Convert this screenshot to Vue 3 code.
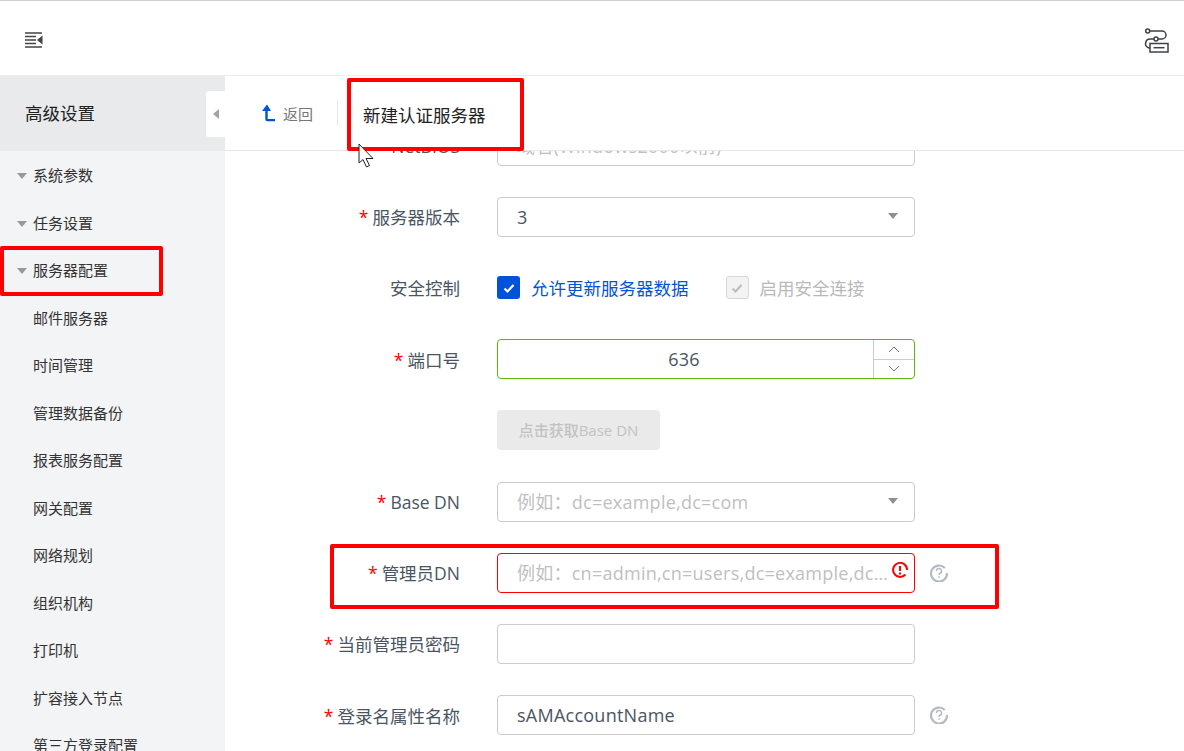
<template>
  <div class="page">
    <header class="topbar">
      <svg class="menu-icon" width="18" height="16" viewBox="0 0 18 16">
        <path d="M0 1h17M0 4.500h11M0 8h11M0 11.500h11M0 15h17" stroke="#444" stroke-width="1.300" fill="none" />
        <path d="M17.500 3.500v9l-5.500-4.500z" fill="#444" />
      </svg>
      <svg class="flow-icon" width="26" height="26" viewBox="0 0 26 26">
        <g fill="none" stroke="#3d4248" stroke-width="1.500">
          <circle cx="4.700" cy="4" r="2" />
          <path d="M6.700 4h12.300a4 4 0 0 1 4 4a4 4 0 0 1-4 4H7a4.500 4.500 0 0 0-2 8.500 5 5 0 0 0 2 .5" />
          <circle cx="13" cy="12" r="2" fill="#fff" />
          <rect x="7" y="16.500" width="18" height="8.500" fill="#fff" />
          <path d="M10.500 20.700h11" />
        </g>
      </svg>
    </header>
    <div class="body">
      <aside class="sidebar">
        <div class="side-title">高级设置</div>
        <button class="collapse"><i class="tri-left"></i></button>
        <ul class="menu">
          <li v-for="item in groups" :key="item" class="group"><i class="tri-down"></i>{{ item }}</li>
          <li v-for="item in children" :key="item" class="child">{{ item }}</li>
        </ul>
      </aside>
      <main class="main">
        <div class="toolbar">
          <span class="back">
            <svg width="15" height="18" viewBox="0 0 15 18">
              <path d="M6 .5 1 7h3.300v8.300a2 2 0 0 0 2 2H14v-2.300H6.700V7H10z" fill="#0052d9" />
            </svg>
            返回
          </span>
          <span class="divider"></span>
          <span class="page-title">新建认证服务器</span>
        </div>
        <div class="scroll">
          <form class="form">
            <div class="row">
              <label>NetBIOS</label>
              <div class="field"><div class="input placeholder">域名(Windows2000以前)</div></div>
            </div>
            <div class="row">
              <label><b>*</b>服务器版本</label>
              <div class="field"><div class="input">3<i class="tri-down select-arrow"></i></div></div>
            </div>
            <div class="row">
              <label>安全控制</label>
              <div class="checks">
                <span class="check on"><span class="box"><svg width="14" height="12" viewBox="0 0 14 12"><path d="M2.500 6.500 5.500 9.500 11.500 3" fill="none" stroke="#fff" stroke-width="2.200" /></svg></span>允许更新服务器数据</span>
                <span class="check off"><span class="box"><svg width="14" height="12" viewBox="0 0 14 12"><path d="M2.500 6.500 5.500 9.500 11.500 3" fill="none" stroke="#bdbdbd" stroke-width="2.200" /></svg></span>启用安全连接</span>
              </div>
            </div>
            <div class="row">
              <label><b>*</b>端口号</label>
              <div class="field">
                <div class="input number">
                  <span class="num-value">636</span>
                  <span class="stepper">
                    <span><svg width="12" height="7" viewBox="0 0 12 7"><path d="M1 6l5-5 5 5" fill="none" stroke="#777" /></svg></span>
                    <span><svg width="12" height="7" viewBox="0 0 12 7"><path d="M1 1l5 5 5-5" fill="none" stroke="#777" /></svg></span>
                  </span>
                </div>
              </div>
            </div>
            <div class="row">
              <label></label>
              <div class="fetch">点击获取Base DN</div>
            </div>
            <div class="row">
              <label><b>*</b>Base DN</label>
              <div class="field"><div class="input placeholder">例如：dc=example,dc=com<i class="tri-down select-arrow"></i></div></div>
            </div>
            <div class="row">
              <label><b>*</b>管理员DN</label>
              <div class="field">
                <div class="input placeholder error">
                  <span class="ellipsis">例如：cn=admin,cn=users,dc=example,dc=com,dc=cn</span>
                  <svg class="err-icon" width="16" height="16" viewBox="0 0 16 16">
                    <path d="M13.500 3.500A7 7 0 1 0 15 8" fill="none" stroke="#f00" stroke-width="2" transform="rotate(40 8 8)" />
                    <path d="M8 4v5M8 10.500v2" stroke="#f00" stroke-width="2" />
                  </svg>
                </div>
                <svg class="help" width="18" height="18" viewBox="0 0 18 18">
                  <path d="M14.800 4A8 8 0 1 0 17 9" fill="none" stroke="#b4bac4" stroke-width="2.200" />
                  <path d="M6.500 7a2.500 2.500 0 1 1 3.500 2.300c-.7.300-1 .7-1 1.700M9 12.300v1.500" fill="none" stroke="#b4bac4" stroke-width="1.500" />
                </svg>
              </div>
            </div>
            <div class="row">
              <label><b>*</b>当前管理员密码</label>
              <div class="field"><div class="input"></div></div>
            </div>
            <div class="row">
              <label><b>*</b>登录名属性名称</label>
              <div class="field">
                <div class="input">sAMAccountName</div>
                <svg class="help" width="18" height="18" viewBox="0 0 18 18">
                  <path d="M14.800 4A8 8 0 1 0 17 9" fill="none" stroke="#b4bac4" stroke-width="2.200" />
                  <path d="M6.500 7a2.500 2.500 0 1 1 3.500 2.300c-.7.300-1 .7-1 1.700M9 12.300v1.500" fill="none" stroke="#b4bac4" stroke-width="1.500" />
                </svg>
              </div>
            </div>
          </form>
        </div>
      </main>
    </div>
    <!-- annotations drawn over the screenshot -->
    <div class="mark mark-title"></div>
    <div class="mark mark-menu"></div>
    <div class="mark mark-dn"></div>
    <svg class="cursor" width="16" height="25" viewBox="0 0 16 25">
      <path d="M1 1v19l4-3.500 3.500 7.500 3-1.500-3.500-7H15z" fill="#fff" stroke="#222" />
    </svg>
  </div>
</template>

<script setup>
const groups = ['系统参数', '任务设置', '服务器配置']
const children = ['邮件服务器', '时间管理', '管理数据备份', '报表服务配置', '网关配置', '网络规划', '组织机构', '打印机', '扩容接入节点', '第三方登录配置']
</script>

<style scoped>
.page {
  position: relative;
  width: 1184px;
  height: 751px;
  overflow: hidden;
  background: #fff;
  border-top: 1px solid #d0d0d0;
  box-sizing: border-box;
  font-family: "Open Sans", "Noto Sans CJK SC", sans-serif;
  color: #4a5563;
}

.topbar {
  height: 75px;
  display: flex;
  align-items: center;
  justify-content: space-between;
  padding: 4px 15px 0 25px;
  box-sizing: border-box;
  border-bottom: 1px solid #ececec;
}

.body {
  display: flex;
  height: 675px;
}

.sidebar {
  position: relative;
  width: 225px;
  flex: none;
  background: #f3f4f6;
  overflow: hidden;
}

.side-title {
  height: 75px;
  line-height: 75px;
  padding-left: 25px;
  background: #e9eaec;
  font-size: 17.500px;
  color: #222;
}

.collapse {
  position: absolute;
  top: 15px;
  right: 0;
  width: 19px;
  height: 46px;
  padding: 0;
  border: none;
  border-radius: 3px 0 0 3px;
  background: #fff;
  display: flex;
  align-items: center;
  justify-content: center;
}

.tri-left {
  border: 5px solid transparent;
  border-left: 0;
  border-right: 6px solid #a0a4aa;
  height: 0;
}

.tri-down {
  display: inline-block;
  width: 0;
  height: 0;
  border: 5px solid transparent;
  border-top: 6px solid #999;
  border-bottom: 0;
}

.menu {
  list-style: none;
  margin: 0;
  padding: 1px 0 0;
  font-size: 15px;
  color: #333;
}

.menu li {
  height: 47.500px;
  line-height: 47.500px;
  white-space: nowrap;
}

.group {
  padding-left: 17px;
}

.group .tri-down {
  margin-right: 6px;
  vertical-align: 2px;
}

.child {
  padding-left: 33px;
}

.main {
  flex: 1;
  min-width: 0;
  display: flex;
  flex-direction: column;
}

.toolbar {
  position: relative;
  z-index: 1;
  height: 75px;
  flex: none;
  display: flex;
  align-items: center;
  padding-left: 36px;
  box-sizing: border-box;
  background: #fff;
  border-bottom: 1px solid #e8e8e8;
}

.back {
  display: flex;
  align-items: center;
  gap: 7px;
  font-size: 15px;
  color: #777;
}

.divider {
  width: 1px;
  height: 26px;
  margin: 0 25px 0 24px;
  background: #e8e8e8;
}

.page-title {
  font-size: 17.500px;
  color: #222;
  padding-top: 2px;
}

.scroll {
  flex: 1;
  overflow: hidden;
}

.form {
  margin-top: -25.400px;
  display: flex;
  flex-direction: column;
  gap: 31.200px;
}

.row {
  display: flex;
  align-items: center;
  height: 40px;
  font-size: 17.500px;
}

.row label {
  width: 235px;
  flex: none;
  text-align: right;
  margin-right: 37px;
}

.row label b {
  color: #f00;
  font-weight: 400;
  margin-right: 4px;
}

.field {
  display: flex;
  align-items: center;
  gap: 15px;
}

.input {
  position: relative;
  width: 418px;
  height: 40px;
  line-height: 38px;
  padding: 0 19px;
  box-sizing: border-box;
  border: 1px solid #cbcbcb;
  border-radius: 4px;
  font-size: 18px;
  letter-spacing: 0.25px;
  white-space: nowrap;
  color: #4a5563;
}

.placeholder {
  color: #c0c0c0;
}

.select-arrow {
  position: absolute;
  right: 16px;
  top: 15px;
  border-top-color: #8f8f8f;
}

.checks {
  display: flex;
  gap: 37px;
}

.check {
  display: flex;
  align-items: center;
  gap: 11px;
  font-size: 17.500px;
}

.check .box {
  width: 23px;
  height: 23px;
  box-sizing: border-box;
  border-radius: 3px;
  display: flex;
  align-items: center;
  justify-content: center;
}

.check.on {
  color: #0052d9;
}

.check.on .box {
  background: #0052d9;
}

.check.off {
  color: #b9b9b9;
}

.check.off .box {
  background: #f3f3f3;
  border: 1px solid #d6d6d6;
}

.number {
  padding: 0;
  border-color: #5cb80f;
  display: flex;
}

.num-value {
  flex: 1;
  padding-right: 3px;
  text-align: center;
}

.stepper {
  width: 40px;
  display: flex;
  flex-direction: column;
  border-left: 1px solid #cbcbcb;
}

.stepper span {
  flex: 1;
  display: flex;
  align-items: center;
  justify-content: center;
}

.stepper span + span {
  border-top: 1px solid #cbcbcb;
}

.fetch {
  width: 163px;
  height: 40px;
  line-height: 40px;
  text-align: center;
  border-radius: 4px;
  background: #eaeaea;
  color: #c2c2c2;
  font-size: 15px;
  font-weight: 500;
}

.error {
  border-color: #f00;
  padding-right: 20px;
}

.ellipsis {
  display: block;
  overflow: hidden;
  text-overflow: ellipsis;
}

.err-icon {
  position: absolute;
  right: 6px;
  top: 8px;
}

.mark {
  position: absolute;
  border: 4px solid #f00;
  border-radius: 2px;
  box-sizing: border-box;
  z-index: 3;
}

.mark-title {
  left: 347px;
  top: 77px;
  width: 177px;
  height: 73px;
}

.mark-menu {
  left: 0;
  top: 245px;
  width: 163px;
  height: 50px;
}

.mark-dn {
  left: 330px;
  top: 543px;
  width: 669px;
  height: 65px;
}

.cursor {
  position: absolute;
  left: 358px;
  top: 142px;
  z-index: 4;
}
</style>

<style>
html, body {
  margin: 0;
  overflow: hidden;
}
</style>
